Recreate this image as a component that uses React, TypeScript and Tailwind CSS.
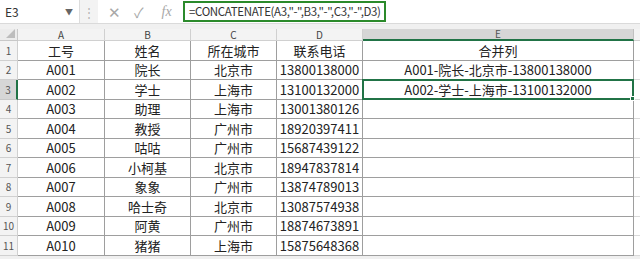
import React from "react";

const rows = [
  ["工号", "姓名", "所在城市", "联系电话", "合并列"],
  ["A001", "院长", "北京市", "13800138000", "A001-院长-北京市-13800138000"],
  ["A002", "学士", "上海市", "13100132000", "A002-学士-上海市-13100132000"],
  ["A003", "助理", "上海市", "13001380126", ""],
  ["A004", "教授", "广州市", "18920397411", ""],
  ["A005", "咕咕", "广州市", "15687439122", ""],
  ["A006", "小柯基", "北京市", "18947837814", ""],
  ["A007", "象象", "广州市", "13874789013", ""],
  ["A008", "哈士奇", "北京市", "13087574938", ""],
  ["A009", "阿黄", "广州市", "18874673891", ""],
  ["A010", "猪猪", "上海市", "15875648368", ""],
];

const cols = ["A", "B", "C", "D", "E"];
const font = { fontFamily: '"Noto Sans CJK SC", "Microsoft YaHei", sans-serif' };

export default function App() {
  return (
    <div className="w-[640px] h-[259px] overflow-hidden bg-[#f0f0f0] text-[#222]" style={font}>
      {/* formula bar */}
      <div className="flex h-[24px] items-center bg-white border-b border-[#dadada]">
        <div className="flex w-[80px] h-full items-center justify-between pl-[5px] pr-[6px] text-[12px] text-[#333] border-r border-[#dcdcdc]">
          <span>E3</span>
          <span className="text-[8px] text-[#666]">▼</span>
        </div>
        <div className="flex w-[18px] h-full items-center justify-center bg-[#f3f3f3] text-[#b5b5b5] text-[12px]">⋮</div>
        <div className="flex w-[83px] h-full items-center bg-white text-[#a8a8a8]">
          <span className="ml-[10px] text-[15px] leading-none">✕</span>
          <span className="ml-[13px] text-[14px] leading-none">✓</span>
          <span className="ml-[18px] text-[14px] italic leading-none" style={{ fontFamily: '"Liberation Serif", serif' }}>fx</span>
        </div>
        <div className="ml-[2px] flex h-[21px] items-center border-2 border-[#2b8a2b] pl-[4px] pr-[3px] text-[11.5px] tracking-[-0.35px] text-[#333] whitespace-nowrap">
          =CONCATENATE(A3,"-",B3,"-",C3,"-",D3)
        </div>
      </div>
      <div className="h-[5px] bg-[#f0f0f0]" />

      {/* sheet */}
      <div className="grid grid-cols-[18px_87px_86px_86px_86px_271px_6px] grid-rows-[12px_repeat(11,19.5px)] bg-white">
        {/* header row */}
        <div className="relative bg-[#ececec] border-r border-b border-[#c8c8c8]">
          <div className="absolute right-[2px] bottom-[2px] h-0 w-0" style={{ borderBottom: "9px solid #bdbdbd", borderLeft: "9px solid transparent" }} />
        </div>
        {cols.map((c) =>
          c === "E" ? (
            <div key={c} className="flex items-center justify-center bg-[#d6d6d6] border-r border-[#c0c0c0] border-b-2 border-b-[#217346] text-[10px] text-[#555] leading-none">
              {c}
            </div>
          ) : (
            <div key={c} className="flex items-center justify-center bg-[#f3f3f3] border-r border-b border-[#d0d0d0] text-[10px] text-[#444] leading-none">
              {c}
            </div>
          )
        )}
        <div className="bg-[#f3f3f3] border-b border-[#d0d0d0]" />

        {rows.map((r, i) => (
          <React.Fragment key={i}>
            <div
              className={
                i === 2
                  ? "flex items-center justify-center bg-[#d6d6d6] border-b border-[#c8c8c8] border-r-2 border-r-[#217346] text-[10px] text-[#555]"
                  : "flex items-center justify-center bg-[#f3f3f3] border-r border-b border-[#d0d0d0] text-[10px] text-[#555]"
              }
            >
              {i + 1}
            </div>
            {r.map((v, j) => (
              <div
                key={j}
                className={
                  j === 4 && i === 2
                    ? "relative flex items-center justify-center border-2 border-[#217346] -ml-px -mt-px text-[13px] whitespace-nowrap"
                    : "flex items-center justify-center border-r border-b border-[#9e9e9e] text-[13px] whitespace-nowrap"
                }
              >
                {v}
                {j === 4 && i === 2 && (
                  <div className="absolute -right-[3px] -bottom-[3px] h-[5px] w-[5px] bg-[#217346] border border-white" />
                )}
              </div>
            ))}
            <div className="border-b border-[#dadada]" />
          </React.Fragment>
        ))}
      </div>
    </div>
  );
}
